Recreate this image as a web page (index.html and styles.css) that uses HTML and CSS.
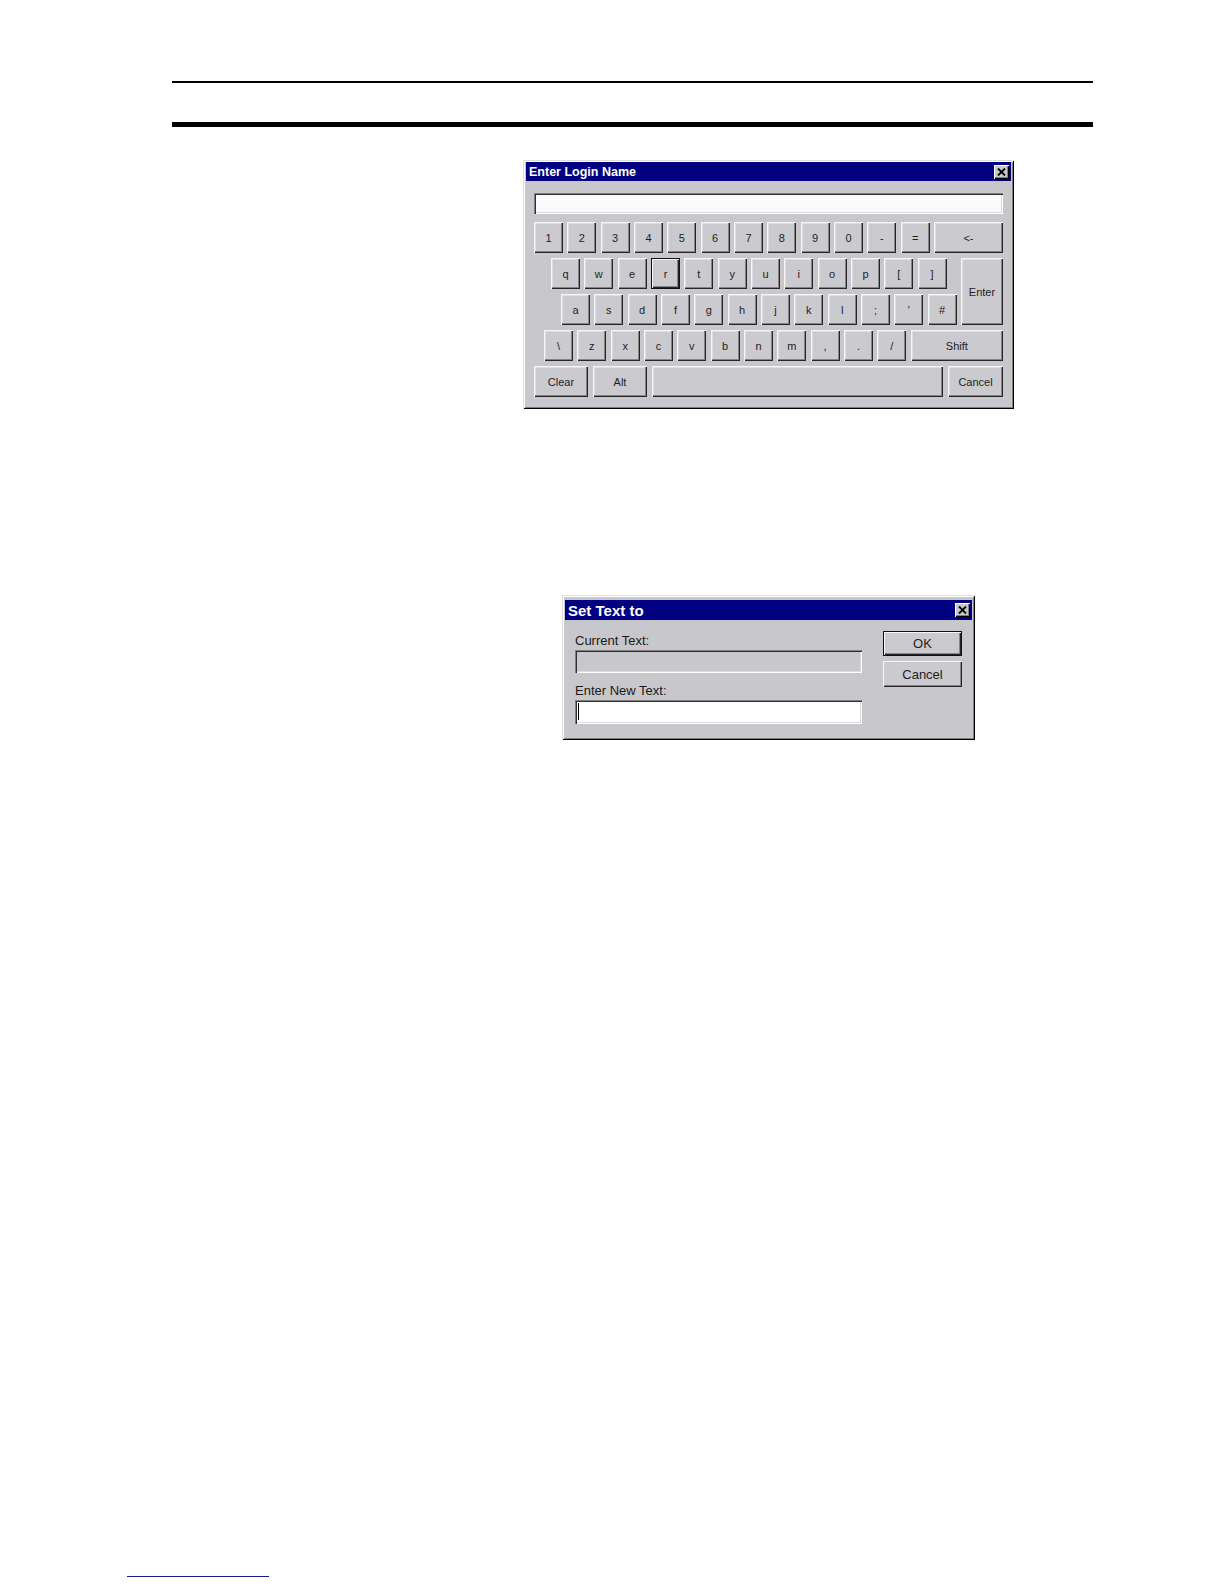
FILE: index.html
```html
<!DOCTYPE html>
<html>
<head>
<meta charset="utf-8">
<title>Dialogs</title>
<link rel="stylesheet" href="styles.css">
</head>
<body>
<div class="page">
  <div class="rule-thin"></div>
  <div class="rule-thick"></div>

  <div class="dialog kbd-dialog">
    <div class="titlebar">
      <span class="title">Enter Login Name</span>
      <span class="close"><svg width="9" height="8" viewBox="0 0 9 8"><path d="M1 0.5 L8 7.5 M8 0.5 L1 7.5" stroke="#000" stroke-width="1.8"/></svg></span>
    </div>
    <div class="kbd-body">
      <div class="entry"></div>
      <div class="keyboard">
        <div class="row row-1">
          <div class="key">1</div><div class="key">2</div><div class="key">3</div><div class="key">4</div><div class="key">5</div><div class="key">6</div><div class="key">7</div><div class="key">8</div><div class="key">9</div><div class="key">0</div><div class="key">-</div><div class="key">=</div><div class="key key-wide">&lt;-</div>
        </div>
        <div class="mid">
          <div class="mid-rows">
            <div class="row row-2">
              <div class="key">q</div><div class="key">w</div><div class="key">e</div><div class="key focus">r</div><div class="key">t</div><div class="key">y</div><div class="key">u</div><div class="key">i</div><div class="key">o</div><div class="key">p</div><div class="key">[</div><div class="key">]</div>
            </div>
            <div class="row row-3">
              <div class="key">a</div><div class="key">s</div><div class="key">d</div><div class="key">f</div><div class="key">g</div><div class="key">h</div><div class="key">j</div><div class="key">k</div><div class="key">l</div><div class="key">;</div><div class="key">'</div><div class="key">#</div>
            </div>
          </div>
          <div class="key key-enter">Enter</div>
        </div>
        <div class="row row-4">
          <div class="key">\</div><div class="key">z</div><div class="key">x</div><div class="key">c</div><div class="key">v</div><div class="key">b</div><div class="key">n</div><div class="key">m</div><div class="key">,</div><div class="key">.</div><div class="key">/</div><div class="key key-wide">Shift</div>
        </div>
        <div class="row row-5">
          <div class="key key-clear">Clear</div><div class="key key-alt">Alt</div><div class="key key-wide"></div><div class="key key-cancel">Cancel</div>
        </div>
      </div>
    </div>
  </div>

  <div class="dialog set-dialog">
    <div class="titlebar titlebar-lg">
      <span class="title">Set Text to</span>
      <span class="close"><svg width="9" height="8" viewBox="0 0 9 8"><path d="M1 0.5 L8 7.5 M8 0.5 L1 7.5" stroke="#000" stroke-width="1.8"/></svg></span>
    </div>
    <div class="set-body">
      <div class="set-fields">
        <div class="label">Current Text:</div>
        <div class="field field-disabled"></div>
        <div class="label label-2">Enter New Text:</div>
        <div class="field field-edit"><span class="caret"></span></div>
      </div>
      <div class="set-buttons">
        <div class="btn btn-default">OK</div>
        <div class="btn btn-cancel">Cancel</div>
      </div>
    </div>
  </div>

  <div class="foot-line"></div>
</div>
</body>
</html>
```
FILE: styles.css
```css
* { box-sizing: border-box; }
html, body { margin: 0; padding: 0; background: #fff; }
body { font-family: "Liberation Sans", Arial, sans-serif; }

.page {
  width: 1224px;
  height: 1584px;
  overflow: hidden;
  display: flow-root;
  background: #fff;
}

.rule-thin {
  margin: 81px 0 0 172px;
  width: 921px;
  height: 2px;
  background: #000;
}
.rule-thick {
  margin: 39px 0 0 172px;
  width: 921px;
  height: 5px;
  background: #000;
}

.dialog {
  background: #c8c7cb;
  box-shadow: inset 1px 1px #dedede, inset -1px -1px #000,
              inset 2px 2px #fff, inset -2px -2px #7f7f7f;
}

.titlebar {
  height: 19px;
  background: #000080;
  color: #fff;
  font-weight: bold;
  font-size: 12.5px;
  display: flex;
  align-items: center;
  justify-content: space-between;
  padding: 0 2px 0 3px;
  white-space: nowrap;
}
.titlebar-lg { height: 20px; font-size: 15px; padding: 0 2px 0 3px; }

.close {
  width: 15px;
  height: 14px;
  background: #c8c7cb;
  box-shadow: inset 1px 1px #fff, inset -1px -1px #000, inset -2px -2px #808080;
  display: flex;
  align-items: center;
  justify-content: center;
}

/* keyboard dialog */
.kbd-dialog {
  margin: 33px 0 0 523px;
  width: 491px;
  height: 249px;
  padding: 2px 3px 3px 3px;
}
.kbd-body { padding: 12px 8px 0 8px; }

.entry {
  height: 21px;
  background: #fbfbfb;
  box-shadow: inset 1px 1px #808080, inset 2px 2px #303030,
              inset -1px -1px #fff, inset -2px -2px #dcdcdc;
}

.keyboard {
  margin-top: 8px;
  display: flex;
  flex-direction: column;
  gap: 5px;
}
.row { display: flex; gap: 4.33px; height: 31px; }
.row-2 { padding-left: 17px; }
.row-3 { padding-left: 27px; }
.row-4 { padding-left: 10px; }
.row-5 { gap: 5px; }

.mid { display: flex; height: 67px; }
.mid-rows { flex: 1; display: flex; flex-direction: column; gap: 5px; }

.key {
  flex: none;
  width: 29px;
  height: 31px;
  background: #cbcace;
  box-shadow: inset 1px 1px #f6f6f6, inset -1px -1px #262626,
              inset -2px -2px #858585, inset 2px 2px #dedde0;
  color: #1e1e1e;
  font-size: 11px;
  display: flex;
  align-items: center;
  justify-content: center;
}
.key-wide { flex: 1; width: auto; }
.key-enter { width: 42px; height: 67px; }
.key-clear, .key-alt { width: 54px; }
.key-cancel { width: 55px; }
.key.focus {
  box-shadow: inset 0 0 0 1px #111, inset 2px 2px #f6f6f6,
              inset -2px -2px #262626, inset -3px -3px #858585;
}

/* set text dialog */
.set-dialog {
  margin: 186px 0 0 562px;
  width: 413px;
  height: 145px;
  padding: 5px 3px 3px 3px;
}
.set-body { display: flex; padding: 0 10px 0 10px; gap: 21px; }
.set-fields { width: 287px; padding-top: 13px; }
.label {
  font-size: 13px;
  line-height: 16px;
  height: 16px;
  color: #1a1a1a;
  margin-bottom: 1px;
}
.label-2 { margin-top: 10px; }
.field {
  height: 23px;
  box-shadow: inset 1px 1px #808080, inset 2px 2px #303030,
              inset -1px -1px #fff, inset -2px -2px #dcdcdc;
}
.field-disabled { background: #c8c7cb; }
.field-edit { height: 24px; background: #fff; position: relative; }
.caret {
  position: absolute;
  left: 3px;
  top: 3px;
  width: 1px;
  height: 17px;
  background: #000;
}

.set-buttons {
  width: 79px;
  padding-top: 11px;
  display: flex;
  flex-direction: column;
  gap: 5px;
}
.btn {
  height: 26px;
  background: #cbcace;
  box-shadow: inset 1px 1px #f6f6f6, inset -1px -1px #262626,
              inset -2px -2px #858585;
  font-size: 13px;
  color: #222;
  display: flex;
  align-items: center;
  justify-content: center;
}
.btn-default {
  height: 25px;
  box-shadow: inset 0 0 0 1px #111, inset 2px 2px #f6f6f6,
              inset -2px -2px #262626, inset -3px -3px #858585;
}

.foot-line {
  margin: 836px 0 0 127px;
  width: 142px;
  height: 1px;
  background: #1c1c86;
}
```
